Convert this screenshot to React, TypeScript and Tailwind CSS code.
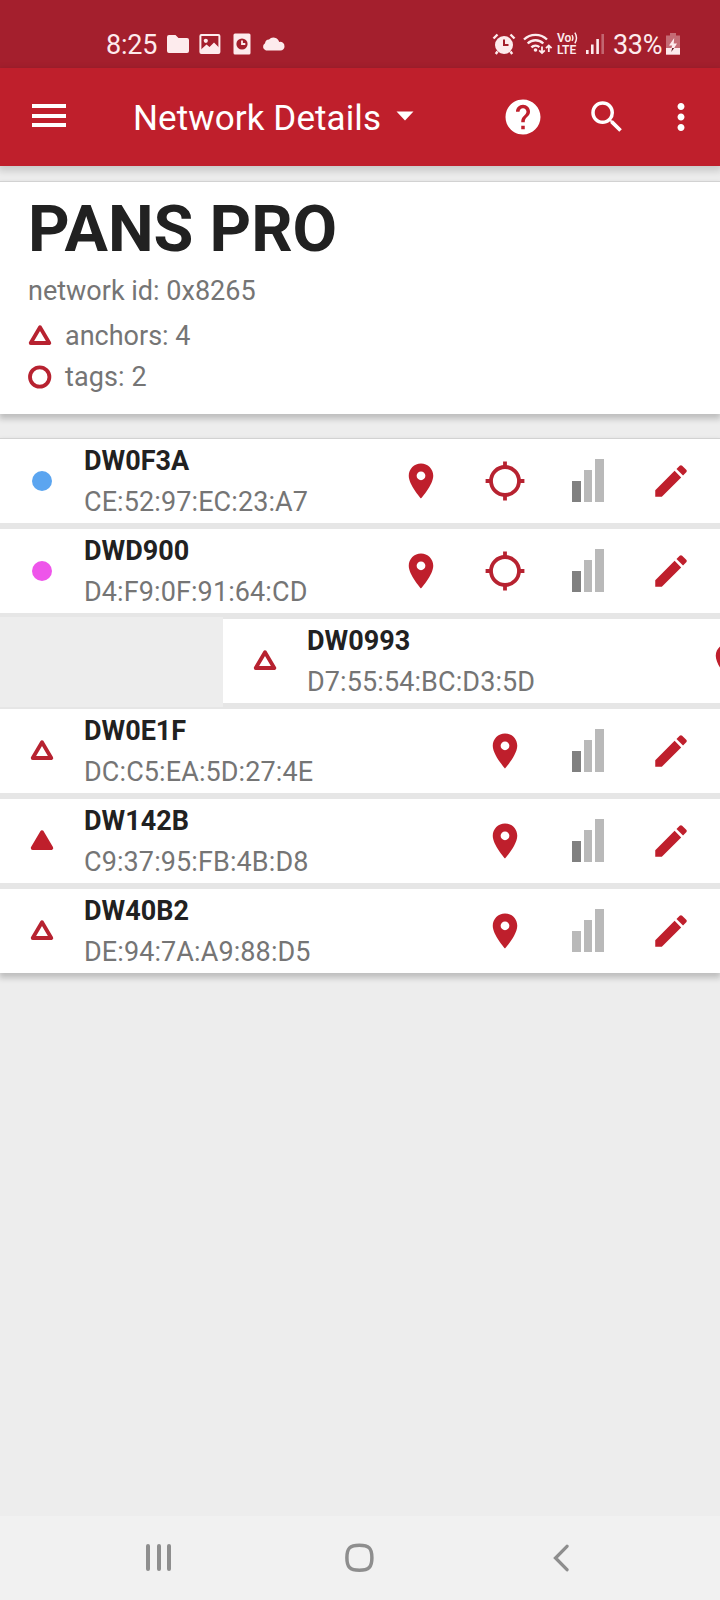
import type { ReactNode } from "react";

type Device = {
  name: string;
  mac: string;
  marker: "blue" | "pink" | "anchor" | "initiator";
  target?: boolean;
  signal: number;
  swiped?: boolean;
};

const devices: Device[] = [
  { name: "DW0F3A", mac: "CE:52:97:EC:23:A7", marker: "blue", target: true, signal: 1 },
  { name: "DWD900", mac: "D4:F9:0F:91:64:CD", marker: "pink", target: true, signal: 1 },
  { name: "DW0993", mac: "D7:55:54:BC:D3:5D", marker: "anchor", signal: 1, swiped: true },
  { name: "DW0E1F", mac: "DC:C5:EA:5D:27:4E", marker: "anchor", signal: 1 },
  { name: "DW142B", mac: "C9:37:95:FB:4B:D8", marker: "initiator", signal: 1 },
  { name: "DW40B2", mac: "DE:94:7A:A9:88:D5", marker: "anchor", signal: 0 },
];

function MaterialIcon({ d, className }: { d: string; className?: string }) {
  return (
    <svg viewBox="0 0 24 24" fill="currentColor" className={`size-[42px] shrink-0 ${className ?? ""}`}>
      <path d={d} />
    </svg>
  );
}

function Triangle({ filled = false }: { filled?: boolean }) {
  return (
    <svg width="24" height="22" viewBox="0 0 24 22" className="shrink-0">
      <path
        d="M12 3.2 21.3 19H2.7z"
        fill={filled ? "#bf1f2c" : "none"}
        stroke={filled ? "#bf1f2c" : "#b72230"}
        strokeWidth="3.8"
        strokeLinejoin="round"
      />
    </svg>
  );
}

function Marker({ type }: { type: Device["marker"] }) {
  if (type === "blue") {
    return <span className="mr-[1px] size-5 rounded-full bg-[#5ba5f0]" />;
  }
  if (type === "pink") {
    return <span className="mr-[1px] size-5 rounded-full bg-[#ee55ea]" />;
  }
  return (
    <span className="mr-[1px] pb-[3px]">
      <Triangle filled={type === "initiator"} />
    </span>
  );
}

function Target() {
  return (
    <svg width="40" height="40" viewBox="0 0 40 40" fill="none" stroke="#b72230">
      <circle cx="20" cy="20" r="14" strokeWidth="3.8" />
      <path d="M20 .6v5M20 34.4v5M.6 20h5M34.4 20h5" strokeWidth="3.8" />
    </svg>
  );
}

function Signal({ level }: { level: number }) {
  return (
    <div className="mb-[1px] flex h-[43px] w-8 items-end gap-[3px]">
      <span className={`h-[21px] w-[9px] ${level > 0 ? "bg-[#808080]" : "bg-[#b9b9b9]"}`} />
      <span className="h-8 w-2 bg-[#b9b9b9]" />
      <span className="h-[43px] w-[9px] bg-[#b9b9b9]" />
    </div>
  );
}

function Cell({ children, className }: { children: ReactNode; className: string }) {
  return <div className={`flex shrink-0 items-center justify-center ${className}`}>{children}</div>;
}

function DeviceRow({ device }: { device: Device }) {
  return (
    <div className="flex h-[84px] w-[720px] shrink-0 items-center bg-white pr-[7px] text-[#bf1f2c]">
      <Cell className="w-[84px]">
        <Marker type={device.marker} />
      </Cell>
      <div className="grow pt-[2px] text-[27px]">
        <p className="leading-10 font-bold text-[#212121]">{device.name}</p>
        <p className="mt-[1px] leading-[41px] tracking-[0.1px] text-[#757575]">{device.mac}</p>
      </div>
      <Cell className="w-[84px]">
        <MaterialIcon d="M12 2C8.13 2 5 5.13 5 9c0 5.25 7 13 7 13s7-7.75 7-13c0-3.87-3.13-7-7-7zm0 9.5a2.5 2.5 0 0 1 0-5 2.5 2.5 0 0 1 0 5z" />
      </Cell>
      {device.target && (
        <Cell className="w-[84px]">
          <Target />
        </Cell>
      )}
      <Cell className="w-[82px]">
        <Signal level={device.signal} />
      </Cell>
      <Cell className="w-[84px]">
        <MaterialIcon d="M3 17.25V21h3.75L17.81 9.94l-3.75-3.75L3 17.25zM20.71 7.04c.39-.39.39-1.02 0-1.41l-2.34-2.34c-.39-.39-1.02-.39-1.41 0l-1.83 1.83 3.75 3.75 1.83-1.83z" />
      </Cell>
    </div>
  );
}

function StatusBar() {
  return (
    <div className="flex h-[68px] shrink-0 items-center bg-[#a41f2d] pt-[20px] text-[27px] leading-[46px] text-[#fdebed]">
      <span className="ml-[106px] w-[61px] pt-[1px] tracking-[-0.2px]">8:25</span>
      <svg width="22" height="20" viewBox="0 0 22 20" fill="currentColor">
        <path d="M2 1h6.5l3 3H20a2 2 0 0 1 2 2v11a2 2 0 0 1-2 2H2a2 2 0 0 1-2-2V3a2 2 0 0 1 2-2z" />
      </svg>
      <svg width="22" height="22" viewBox="0 0 22 22" className="ml-[10px]">
        <rect x="1.4" y="2" width="19" height="18" rx="1" fill="none" stroke="currentColor" strokeWidth="2" />
        <circle cx="6.8" cy="7.8" r="2.1" fill="currentColor" />
        <path d="M2 16.5 7.5 11.5 10.5 14 15 9.5 20 14.5V20H2z" fill="currentColor" />
      </svg>
      <svg width="18" height="22" viewBox="0 0 18 22" className="ml-3">
        <rect x=".5" y=".5" width="17" height="21" rx="1.5" fill="currentColor" />
        <circle cx="9" cy="11" r="5.6" fill="#a31f2c" />
        <path d="M9 7.5V11h3.3" fill="none" stroke="currentColor" strokeWidth="1.8" />
      </svg>
      <svg width="24" height="16" viewBox="0 0 24 16" fill="currentColor" className="mb-[1px] ml-[10px]">
        <path d="M5 14.5a4 4 0 0 1-1-7.3 4.2 4.2 0 0 1 4-3.7A6 6 0 0 1 18.2 5.9a4.4 4.4 0 0 1 5.3 4.5 4 4 0 0 1-4 4.1z" />
      </svg>
      <div className="ml-auto flex h-[46px] items-center pr-10">
        <svg width="24" height="22" viewBox="0 0 24 22">
          <circle cx="12" cy="12" r="9" fill="currentColor" />
          <path d="m1.5 5.5 4-4M22.5 5.5l-4-4M5.5 18.5 3.8 21M18.5 18.5l1.7 2.5" stroke="currentColor" strokeWidth="2.4" />
          <path d="M12 6.5V12h4.5" fill="none" stroke="#a31f2c" strokeWidth="2" />
        </svg>
        <svg width="30" height="22" viewBox="0 0 30 22" fill="none" stroke="currentColor" strokeWidth="2.4" className="ml-[7px]">
          <path d="M1 6.5a16.5 16.5 0 0 1 23 0M4.7 10.5a11 11 0 0 1 15.6 0M8.4 14.3a6 6 0 0 1 8-.2" />
          <circle cx="12.5" cy="17" r="1.8" fill="currentColor" stroke="none" />
          <path d="M19 13.5v6.5m-2.8-2.7 2.8 2.8 2.8-2.8M25.8 19v-6.5M23 15.2l2.8-2.8 2.8 2.8" strokeWidth="1.8" />
        </svg>
        <div className="ml-1 flex w-[22px] flex-col text-[12px] leading-[12px] font-semibold">
          <span className="flex items-center">
            Vo
            <svg width="8" height="12" viewBox="0 0 8 12" fill="none" stroke="currentColor" strokeWidth="1.5">
              <path d="M1 3q2 3 0 6M4 .5q3.5 5.5 0 11" />
            </svg>
          </span>
          <span>LTE</span>
        </div>
        <svg width="18" height="20" viewBox="0 0 18 20" fill="currentColor" className="ml-[7px]">
          <rect x="0" y="16" width="2.6" height="4" />
          <rect x="5" y="10.5" width="2.6" height="9.5" />
          <rect x="10.3" y="5" width="2.6" height="15" />
          <rect x="15.4" width="2.6" height="20" opacity=".35" />
        </svg>
        <span className="ml-[9px] w-[49px] pt-[1px] tracking-[-0.3px]">33%</span>
        <svg width="14" height="22" viewBox="0 0 14 22" className="ml-[4px]">
          <path d="M4 0h6v2.5h4V22H0V2.5h4z" fill="currentColor" opacity=".38" />
          <path d="M0 15h14v6.5H0z" fill="currentColor" />
          <path d="M8.2 5 3 12.5h3.2L5.5 15h2.7L11 10.5H7.7z" fill="currentColor" />
          <path d="M6.2 15h2l-3 4z" fill="#5b1a22" />
        </svg>
      </div>
    </div>
  );
}

function AppBar() {
  return (
    <header className="relative z-10 flex h-[98px] shrink-0 items-center bg-[#bf1f2c] pr-[18px] pl-8 text-white shadow-[0_3px_7px_2px_rgba(0,0,0,0.15)]">
      <div className="flex w-[34px] flex-col gap-[5.5px] pb-[3px]">
        <span className="h-1 bg-white" />
        <span className="h-1 bg-white" />
        <span className="h-1 bg-white" />
      </div>
      <h1 className="mt-[3px] ml-[67px] w-[248px] text-[35px] leading-[50px] tracking-[0.1px] whitespace-nowrap">
        Network Details
      </h1>
      <svg width="18" height="10" viewBox="0 0 18 10" fill="currentColor" className="mb-[2px] ml-[15px]">
        <path d="M.5.5h17L9 9.5z" />
      </svg>
      <div className="ml-auto flex items-center">
        <MaterialIcon d="M12 2C6.48 2 2 6.48 2 12s4.48 10 10 10 10-4.48 10-10S17.52 2 12 2zm1 17h-2v-2h2v2zm2.07-7.75-.9.92C13.45 12.9 13 13.5 13 15h-2v-.5c0-1.1.45-2.1 1.17-2.83l1.24-1.26c.37-.36.59-.86.59-1.41 0-1.1-.9-2-2-2s-2 .9-2 2H8c0-2.21 1.79-4 4-4s4 1.79 4 4c0 .88-.36 1.68-.93 2.25z" />
        <MaterialIcon
          className="ml-[42px]"
          d="M15.5 14h-.79l-.28-.27A6.471 6.471 0 0 0 16 9.5 6.5 6.5 0 1 0 9.5 16c1.61 0 3.09-.59 4.23-1.57l.27.28v.79l5 4.99L20.49 19l-4.99-5zm-6 0C7.01 14 5 11.99 5 9.5S7.01 5 9.5 5 14 7.01 14 9.5 11.99 14 9.5 14z"
        />
        <MaterialIcon
          className="ml-8"
          d="M12 8c1.1 0 2-.9 2-2s-.9-2-2-2-2 .9-2 2 .9 2 2 2zm0 2c-1.1 0-2 .9-2 2s.9 2 2 2 2-.9 2-2-.9-2-2-2zm0 6c-1.1 0-2 .9-2 2s.9 2 2 2 2-.9 2-2-.9-2-2-2z"
        />
      </div>
    </header>
  );
}

function NetworkCard() {
  return (
    <section className="mt-[15px] h-[233px] border-t border-[#d2d2d2] bg-white px-7 pt-[9px] text-[27px] text-[#757575] shadow-[0_4px_6px_1px_rgba(0,0,0,0.2)]">
      <h2 className="text-[64.7px] leading-[76px] font-bold text-[#212121]">PANS PRO</h2>
      <p className="mt-[2px] leading-[44px]">network id: 0x8265</p>
      <p className="mt-[3px] flex items-center leading-[41px]">
        <span className="w-[37px] pb-[4px]">
          <Triangle />
        </span>
        anchors: 4
      </p>
      <p className="flex items-center leading-[41px] tracking-[0.1px]">
        <svg width="24" height="24" viewBox="0 0 24 24" className="mr-[13px] mb-[2px]">
          <circle cx="11.7" cy="12" r="9.7" fill="none" stroke="#b72230" strokeWidth="3.8" />
        </svg>
        tags: 2
      </p>
    </section>
  );
}

function NavBar() {
  return (
    <nav className="flex h-[84px] shrink-0 items-center bg-[#f1f1f1] pb-[1px] pl-[146px] text-[#8e8e8e]">
      <div className="flex h-[27px] w-[25px] justify-between">
        <span className="w-1 rounded-full bg-current" />
        <span className="w-1 rounded-full bg-current" />
        <span className="w-1 rounded-full bg-current" />
      </div>
      <svg width="30" height="30" viewBox="0 0 30 30" fill="none" stroke="currentColor" strokeWidth="3.5" className="ml-[173px]">
        <path d="M15.400 2.200c9.500 0 12.500 3 12.500 12.500s-3 12.500-12.500 12.500S2.900 24.200 2.900 14.700 5.900 2.200 15.400 2.200z" />
      </svg>
      <svg width="17" height="28" viewBox="0 0 17 28" fill="none" stroke="currentColor" strokeWidth="3.3" strokeLinecap="round" className="ml-[179px]">
        <path d="M14 2.3 2.5 14 14 25.7" />
      </svg>
    </nav>
  );
}

export default function App() {
  return (
    <div className="flex h-[1600px] w-[720px] flex-col overflow-hidden bg-[#ededed] font-['Roboto',sans-serif]">
      <StatusBar />
      <AppBar />
      <main className="grow">
        <NetworkCard />
        <section className="mt-6 border-t border-[#d2d2d2] bg-[#e6e6e6] shadow-[0_4px_6px_1px_rgba(0,0,0,0.2)]">
          <div className="flex flex-col gap-[6px]">
            {devices.map((device) =>
              device.swiped ? (
                <div key={device.name} className="flex h-[84px] overflow-x-clip">
                  <div className="-mt-[2px] h-[90px] w-[223px] shrink-0 bg-[#ededed]" />
                  <DeviceRow device={device} />
                </div>
              ) : (
                <DeviceRow key={device.name} device={device} />
              ),
            )}
          </div>
        </section>
      </main>
      <NavBar />
    </div>
  );
}
